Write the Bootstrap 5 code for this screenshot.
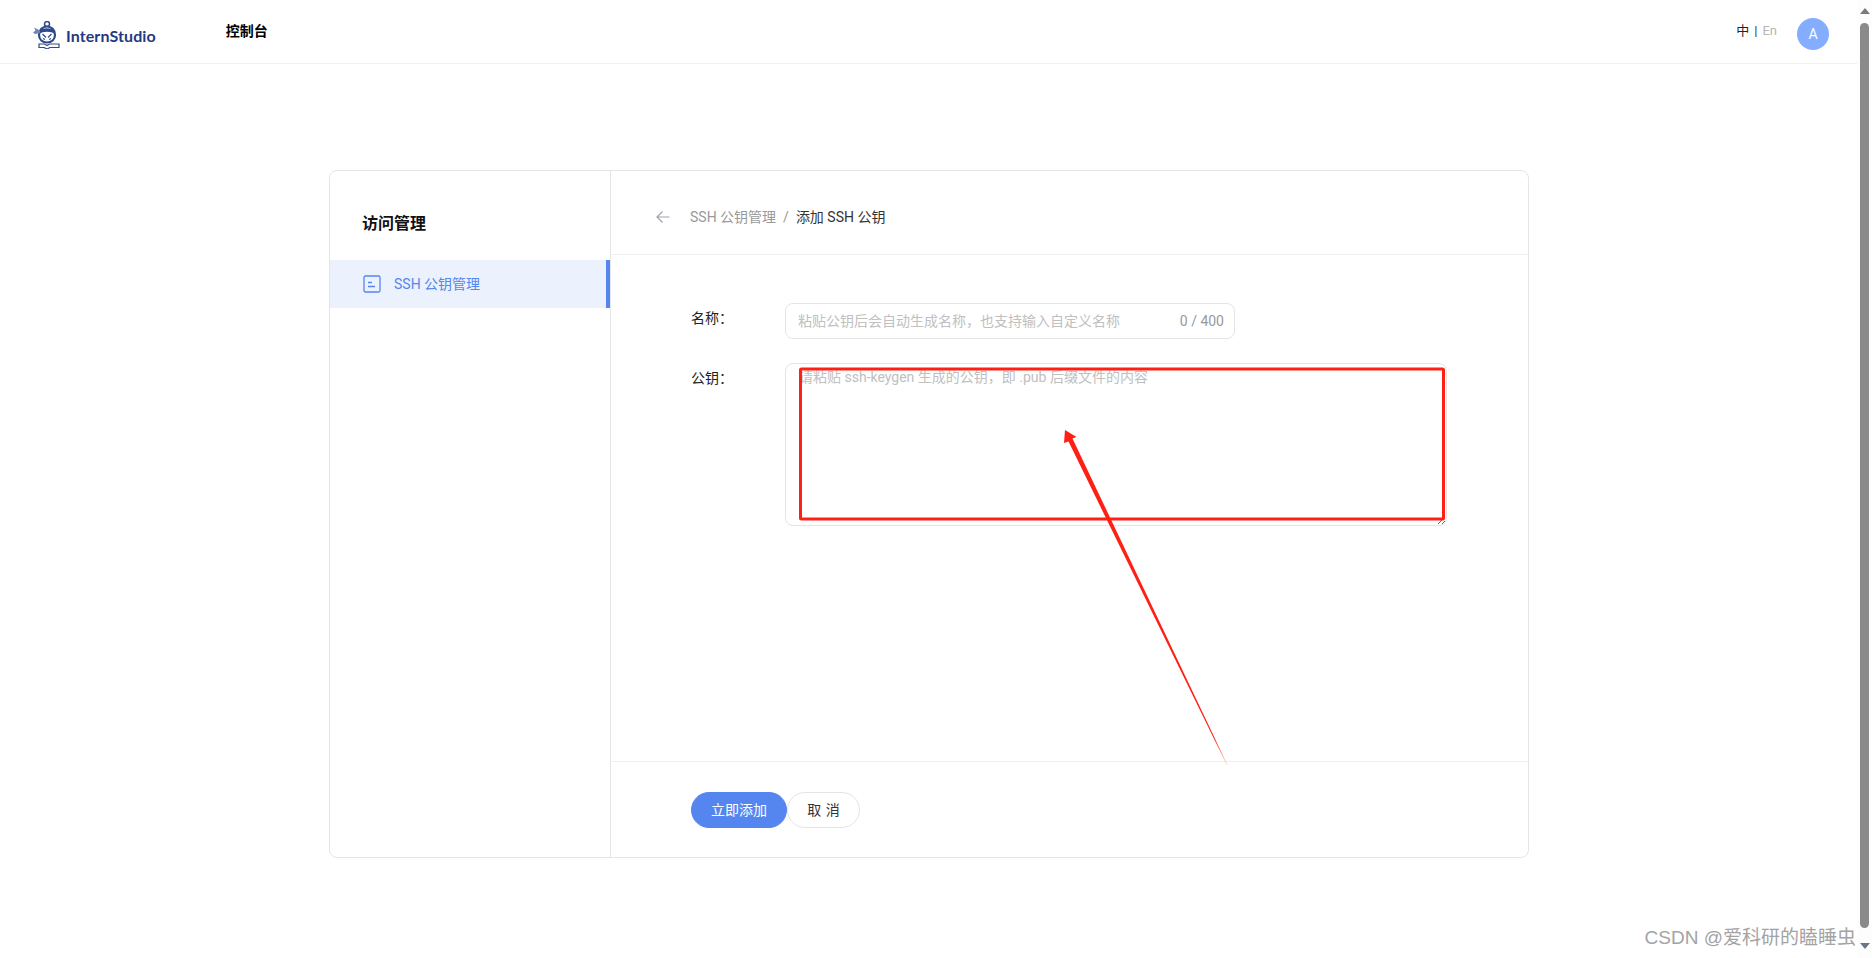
<!DOCTYPE html>
<html lang="zh-CN">
<head>
  <meta charset="UTF-8">
  <meta name="viewport" content="width=device-width, initial-scale=1.0">
  <title>InternStudio - 添加 SSH 公钥</title>
  <link href="https://cdn.jsdelivr.net/npm/bootstrap@5.3.0/dist/css/bootstrap.min.css" rel="stylesheet">
  <style>
    html, body { height: 958px; overflow: hidden; }
    body {
      font-family: "Roboto", "Noto Sans CJK SC", sans-serif;
      font-size: 14px;
      color: #333;
      background: #fff;
      position: relative;
    }
    .top-bar { height: 64px; border-bottom: 1px solid #f0f0f2; padding: 0 29px 0 33px; margin-right: 14px; }
    .logo-mark { margin-top: 6px; flex: none; }
    .brand-name { font-family: "Lato", sans-serif; font-weight: 700; font-size: 16px; color: #1f3a80; margin-left: 6px; margin-top: 9px; letter-spacing: .1px; }
    .console-link { font-weight: 700; color: #000; margin-left: 70px; }
    .lang-switch { margin-right: 20px; margin-top: -2px; font-size: 13px; color: #b5b5b5; }
    .lang-on { color: #222; }
    .lang-bar { color: #333; margin: 0 5px; }
    .user-dot { width: 32px; height: 32px; border-radius: 50%; background: #85adff; color: #fff; font-size: 14px; margin-top: 5px; }
    .page-wrap { padding: 106px 14px 0 0; }
    .panel-box { width: 1200px; height: 688px; border: 1px solid #e4e5e8; border-radius: 8px; overflow: hidden; }
    .side-col { width: 281px; border-right: 1px solid #e4e5e8; flex: none; }
    .side-title { font-size: 16px; font-weight: 700; color: #111; height: 89px; padding: 41px 0 0 32px; line-height: 24px; }
    .side-item { height: 48px; background: #ebf2fd; color: #5585ef; border-right: 4px solid #5585ef; padding-left: 33px; gap: 13px; }
    .main-head { height: 84px; border-bottom: 1px solid #f0f0f2; padding: 9px 0 0 45px; gap: 20px; }
    .main-head .breadcrumb { --bs-breadcrumb-divider-color: #999; --bs-breadcrumb-item-padding-x: 7px; }
    .main-head .breadcrumb-item a { color: #999; text-decoration: none; }
    .main-head .breadcrumb-item.active { color: #333; }
    .form-area { padding: 48px 0 0 80px; }
    .field-row { margin-bottom: 24px; }
    .field-label { width: 94px; flex: none; color: #222; line-height: 30px; height: 36px; }
    .input-holder { width: 450px; }
    .name-input.form-control, .key-input.form-control {
      border-color: #e2e4ea; border-radius: 8px; font-size: 14px; box-shadow: none; color: #333;
    }
    .name-input.form-control { height: 36px; padding: 0 70px 0 12px; }
    .key-input.form-control { width: 662px; height: 163px; min-height: 0; padding: 4px 13px; line-height: 19px; }
    .form-control::placeholder { color: #c0c0c0; }
    .char-count { right: 11px; top: 0; line-height: 36px; color: #999; }
    .main-foot { height: 96px; border-top: 1px solid #f0f0f2; padding: 30px 0 0 80px; }
    .btn-save.btn, .btn-cancel.btn { height: 36px; font-size: 14px; padding: 0; line-height: 34px; }
    .btn-save.btn { width: 96px; background: #5585ef; border-color: #5585ef; color: #fff; }
    .btn-cancel.btn { width: 73px; background: #fff; border-color: #e2e4ea; color: #333; word-spacing: 1px; }
    .mark-layer { position: absolute; left: 0; top: 0; pointer-events: none; }
    .page-scroll { position: absolute; right: 0; top: 0; width: 15px; height: 958px; background: #fdfdfd; }
    .scroll-thumb { position: absolute; left: 3px; top: 23px; width: 9px; height: 905px; border-radius: 5px; background: #8a8a8a; }
    .scroll-up, .scroll-down { position: absolute; left: 3px; width: 0; height: 0; border-left: 5px solid transparent; border-right: 5px solid transparent; }
    .scroll-up { top: 8px; border-bottom: 6px solid #7a7a7a; }
    .scroll-down { top: 943px; border-top: 6px solid #6b7785; }
    .blog-mark { position: absolute; right: 16px; top: 924px; font-family: "Liberation Sans", "Noto Sans CJK SC", sans-serif; font-size: 19px; line-height: 28px; color: #a3a3a3; white-space: nowrap; }
  </style>
</head>
<body>
  <!-- 顶部导航 -->
  <header class="top-bar d-flex align-items-center">
    <svg class="logo-mark" width="27" height="28" viewBox="0 0 27 28" fill="none">
      <circle cx="14" cy="3" r="2.500" fill="#fff" stroke="#2f4a8c" stroke-width="1.500"/>
      <path d="M6 14C6 9 9.500 5.500 14 5.500S22 9 22 14c0 4.500-3.500 7.500-8 7.500S6 18.500 6 14z" fill="#fff" stroke="#2f4a8c" stroke-width="2.200"/>
      <path d="M6 10.500C9 6 19 6 22 10.500V13C18 10 10 10 6 13z" fill="#2f4a8c"/>
      <path d="M7 9.500 1 6.500 2.500 9.500 0 11.500 2 13 7 12z" fill="#6f83b5"/>
      <path d="M9.500 13l3.500 3.500M18.500 13 15 16.500M10 17.500l2 1M18 17.500l-2 1" stroke="#2f4a8c" stroke-width="1.200"/>
      <path d="M6 23h5.500l2.500 1.500 2.500-1.500H26v3.500h-9L14 28l-3-1.500H6z" fill="#fff" stroke="#2f4a8c" stroke-width="1.200"/>
    </svg>
    <span class="brand-name">InternStudio</span>
    <a class="console-link text-decoration-none">控制台</a>
    <div class="ms-auto d-flex align-items-center">
      <div class="lang-switch"><span class="lang-on">中</span><span class="lang-bar">|</span>En</div>
      <div class="user-dot d-flex align-items-center justify-content-center">A</div>
    </div>
  </header>

  <div class="page-wrap d-flex justify-content-center">
    <div class="panel-box d-flex">
      <aside class="side-col">
        <div class="side-title">访问管理</div>
        <div class="side-item d-flex align-items-center">
          <svg width="18" height="18" viewBox="0 0 18 18" fill="none" stroke="#5585ef" stroke-width="1.300">
            <rect x="1" y="1" width="16" height="16" rx="1.500"/>
            <path d="M5 7.500h4M5 11.500h7"/>
          </svg>
          <span>SSH 公钥管理</span>
        </div>
      </aside>
      <main class="flex-grow-1 d-flex flex-column">
        <div class="main-head d-flex align-items-center">
          <svg width="14" height="14" viewBox="0 0 14 14" fill="none" stroke="#a0a3aa" stroke-width="1.200">
            <path d="M13.500 7H1M6.500 1.500 1 7l5.500 5.500"/>
          </svg>
          <ol class="breadcrumb mb-0">
            <li class="breadcrumb-item"><a href="#">SSH 公钥管理</a></li>
            <li class="breadcrumb-item active">添加 SSH 公钥</li>
          </ol>
        </div>
        <form class="form-area flex-grow-1">
          <div class="field-row d-flex">
            <label class="field-label">名称：</label>
            <div class="input-holder position-relative">
              <input class="form-control name-input" type="text" placeholder="粘贴公钥后会自动生成名称，也支持输入自定义名称">
              <span class="char-count position-absolute">0 / 400</span>
            </div>
          </div>
          <div class="field-row d-flex">
            <label class="field-label">公钥：</label>
            <textarea class="form-control key-input" placeholder="请粘贴 ssh-keygen 生成的公钥，即 .pub 后缀文件的内容"></textarea>
          </div>
        </form>
        <div class="main-foot d-flex align-items-start">
          <button type="button" class="btn btn-save rounded-pill">立即添加</button>
          <button type="button" class="btn btn-cancel rounded-pill">取 消</button>
        </div>
      </main>
    </div>
  </div>

  <!-- 截图上的红色标注 -->
  <svg class="mark-layer" width="1872" height="958" viewBox="0 0 1872 958" fill="none">
    <defs>
      <linearGradient id="arrowFade" gradientUnits="userSpaceOnUse" x1="1065" y1="430" x2="1227" y2="765">
        <stop offset="0.92" stop-color="#fe2014"/>
        <stop offset="1" stop-color="#fe2014" stop-opacity="0.200"/>
      </linearGradient>
    </defs>
    <rect x="800.500" y="369" width="643" height="150" rx="1" stroke="#fe2014" stroke-width="3"/>
    <path d="M1065 430 1076.500 437 1072.500 438.500 1227.500 765 1226.800 765 1068.500 441.500 1064 443z" fill="url(#arrowFade)"/>
  </svg>

  <div class="page-scroll">
    <span class="scroll-up"></span>
    <span class="scroll-thumb"></span>
    <span class="scroll-down"></span>
  </div>
  <div class="blog-mark">CSDN @爱科研的瞌睡虫</div>

  <script src="https://cdn.jsdelivr.net/npm/bootstrap@5.3.0/dist/js/bootstrap.bundle.min.js"></script>
</body>
</html>
